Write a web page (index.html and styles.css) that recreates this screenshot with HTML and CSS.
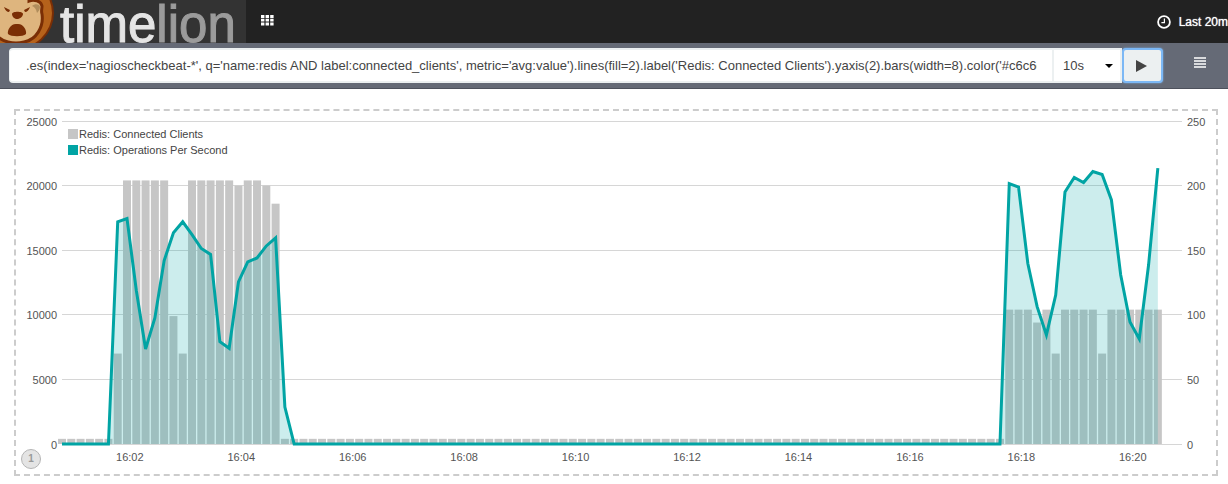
FILE: index.html
```html
<!DOCTYPE html>
<html lang="en">
  <head>
    <meta charset="UTF-8" />
    <meta name="viewport" content="width=device-width, initial-scale=1.0" />
    <title>Timelion</title>
    <link rel="stylesheet" href="styles.css">
  </head>
  <body>
    <header class="navbar">
      <a class="logo" href="#" aria-label="timelion">
        <svg class="lion" width="56" height="43" viewBox="0 0 56 43" aria-hidden="true">
          <ellipse cx="14" cy="13" rx="40" ry="38" fill="#7a2e05" />
          <ellipse cx="14" cy="13" rx="38" ry="36" fill="#b5621b" />
          <path d="M29 1 C34 -1 41 1 42 6 C42 9 41 11 42 14 C44 27 36 40 24 42 C20 43 12 43 8 42 C0 40 -4 36 -6 30 L-6 -4 L29 -4 Z" fill="#deb57e" stroke="#7a2e05" stroke-width="3" />
          <path d="M32 6 C35 3 40 4 40 7 C40 10 38 12 37 13 C36 9 35 7 32 6 Z" fill="#b08d5c" />
          <path d="M4 7 L10 10 L9 12 C7 12 5 10 4 7 Z M30 7 L24 10 L25 12 C27 12 29 10 30 7 Z" fill="#7a2e05" />
          <path d="M12 14 C12 11 23 11 23 14 C23 17 19 19 17 19 C15 19 12 17 12 14 Z" fill="#7a2e05" />
          <path d="M17 24 C23 23 27 30 26 34 C23 37 11 37 8 34 C7 30 11 23 17 24 Z" fill="#7a2e05" />
        </svg>
        <span class="wordmark">time<span class="wordmark-end">lion</span></span>
      </a>
      <button class="apps" type="button" aria-label="Apps">
        <svg width="13" height="11" viewBox="0 0 13 11" fill="#fff">
          <path d="M0 0h3.4v3H0z M4.6 0H8v3H4.6z M9.2 0h3.4v3H9.2z M0 3.8h3.4v2.8H0z M4.6 3.8H8v2.8H4.6z M9.2 3.8h3.4v2.8H9.2z M0 7.4h3.4v3H0z M4.6 7.4H8v3H4.6z M9.2 7.4h3.4v3H9.2z" />
        </svg>
      </button>
      <button class="timepicker" type="button">
        <svg width="14" height="14" viewBox="0 0 14 14" fill="none" stroke="#fff">
          <circle cx="7" cy="7" r="5.9" stroke-width="1.8" />
          <path d="M7.4 3.6V7.6H4.4" stroke-width="1.2" />
        </svg>
        <span>Last 20m</span>
      </button>
    </header>

    <form class="toolbar" onsubmit="return false">
      <div class="search">
        <input
          type="text"
          class="expression"
          aria-label="Timelion expression"
          spellcheck="false"
          value=".es(index='nagioscheckbeat-*', q='name:redis AND label:connected_clients', metric='avg:value').lines(fill=2).label('Redis: Connected Clients').yaxis(2).bars(width=8).color('#c6c6c6')"
        />
        <div class="interval">
          <select aria-label="Interval">
            <option>1s</option>
            <option selected>10s</option>
            <option>1m</option>
          </select>
        </div>
        <button class="run" type="submit" aria-label="Run">
          <svg width="11" height="12" viewBox="0 0 11 12"><path d="M0 0L11 6L0 12Z" fill="#444" /></svg>
        </button>
      </div>
      <button class="menu" type="button" aria-label="Menu">
        <svg width="12" height="11" viewBox="0 0 12 11"><path d="M0 1h12M0 4h12M0 7h12M0 10h12" stroke="#fff" stroke-width="1.4" /></svg>
      </button>
    </form>

    <main class="sheet">
      <section class="cell">
        <svg id="chart" class="chart" role="img" aria-label="Redis clients and operations"></svg>
        <ul class="legend">
          <li><i class="swatch clients"></i>Redis: Connected Clients</li>
          <li><i class="swatch operations"></i>Redis: Operations Per Second</li>
        </ul>
        <span class="cell-id">1</span>
      </section>
    </main>

    <script>
      const POINTS = 119;
      const SPAN = 120.6;
      const FIRST_TICK = 7.3;
      const HEIGHT = 363;
      const plot = { left: 46, right: 34, top: 10, bottom: 333 };

      const operations = new Array(POINTS).fill(0);
      const clients = new Array(POINTS).fill(4);

      function setValues(series, start, values) {
        values.forEach((value, i) => (series[start + i] = value));
      }

      setValues(operations, 6, [
        17200, 17450, 11900, 7350, 9750, 14200, 16350, 17200, 16200, 15130,
        14670, 7920, 7410, 12540, 14090, 14400, 15330, 15950, 2860,
      ]);
      setValues(operations, 102, [
        20150, 19890, 13970, 10630, 8440, 11530, 19500, 20630, 20240, 21090,
        20860, 18890, 13080, 9440, 8130, 13850, 21360,
      ]);
      setValues(clients, 6, [
        70, 204, 204, 204, 204, 204, 99, 70, 204, 204, 204, 204, 204, 200,
        204, 204, 200, 186,
      ]);
      setValues(clients, 102, [
        104, 104, 104, 94, 104, 70, 104, 104, 104, 104, 70, 104, 104, 104,
        104, 104, 104,
      ]);

      function drawChart() {
        const chart = document.getElementById("chart");
        const width = chart.parentElement.clientWidth;
        const step = (width - plot.left - plot.right) / SPAN;
        const end = width - plot.right;
        const x = (i) => plot.left + i * step;
        const y = (value, max) =>
          plot.bottom - (value / max) * (plot.bottom - plot.top);
        let out = "";

        for (let i = 0; i <= 5; i++) {
          const py = Math.floor(y(i, 5)) + 0.5;
          out += `<line class="grid" x1="${plot.left}" x2="${end}" y1="${py}" y2="${py}" />`;
          out += `<text class="tick" text-anchor="end" x="${plot.left - 5}" y="${py + 4}">${i * 5000}</text>`;
          out += `<text class="tick" x="${end + 5}" y="${py + 4}">${i * 50}</text>`;
        }

        clients.forEach((value, i) => {
          const top = y(value, 250);
          out += `<rect class="bar" x="${x(i) - step * 0.43}" y="${top}" width="${step * 0.86}" height="${plot.bottom - top}" />`;
        });

        const line = operations.map((value, i) => `${x(i)},${y(value, 25000)}`).join(" ");
        out += `<polygon class="area" points="${x(0)},${plot.bottom} ${line} ${x(POINTS - 1)},${plot.bottom}" />`;
        out += `<polyline class="line" points="${line}" />`;

        for (let i = 0; i < 10; i++) {
          const minute = String(2 + i * 2).padStart(2, "0");
          out += `<text class="tick" text-anchor="middle" x="${x(FIRST_TICK + i * 12)}" y="350">16:${minute}</text>`;
        }

        chart.setAttribute("width", width);
        chart.setAttribute("height", HEIGHT);
        chart.innerHTML = out;
      }

      drawChart();
      window.addEventListener("resize", drawChart);
    </script>
  </body>
</html>
```
FILE: styles.css
```css
* {
  box-sizing: border-box;
}
body {
  margin: 0;
  background-color: #fff;
  color: #444;
  font-family: "Liberation Sans", Arial, sans-serif;
  font-size: 13px;
}
button {
  display: flex;
  align-items: center;
  padding: 0;
  border: 0;
  background: none;
  font-family: inherit;
  cursor: pointer;
}
.navbar {
  display: flex;
  height: 43px;
  overflow: hidden;
  background-color: #222;
}
.logo {
  display: flex;
  width: 246px;
  background-color: #333;
  text-decoration: none;
}
.lion {
  flex: none;
}
.wordmark {
  margin-left: 4px;
  color: #e4e4e4;
  font-size: 51px;
  line-height: 49px;
  -webkit-text-stroke: 1px;
}
.wordmark-end {
  color: #9b9b9b;
}
.apps {
  margin-left: 15px;
  padding-bottom: 3px;
}
.timepicker {
  gap: 8px;
  margin-left: auto;
  color: #fff;
  font-size: 12px;
  text-shadow: 0 0 1px #fff;
  white-space: nowrap;
}
.toolbar {
  display: flex;
  align-items: flex-start;
  padding: 5px 22px 5px 9px;
  border-bottom: 1px solid #4d515c;
  background-color: #656a76;
}
.search {
  display: flex;
  flex: 1;
  min-width: 0;
  height: 35px;
}
.expression,
.interval select {
  height: 35px;
  border: 2px solid #ecf0f1;
  background-color: #fff;
  color: #444;
  font-family: inherit;
  font-size: 13px;
  outline: none;
}
.expression {
  flex: 1;
  min-width: 0;
  padding: 0 15px 0 16px;
  border-left-width: 1px;
  border-right-width: 1px;
  border-radius: 4px 0 0 4px;
}
.interval {
  position: relative;
}
.interval select {
  width: 69px;
  padding: 0 9px;
  border-left-width: 1px;
  border-radius: 0;
  appearance: none;
}
.interval::after {
  content: "";
  position: absolute;
  top: 16px;
  right: 9px;
  border: 4px solid transparent;
  border-top-color: #000;
  border-bottom: 0;
  pointer-events: none;
}
.run {
  justify-content: center;
  width: 41px;
  padding-right: 3px;
  border: 2px solid #7cb8f5;
  border-radius: 4px;
  background-color: #ecf0f1;
  box-shadow: 0 0 2px #7cb8f5;
}
.menu {
  margin: 9px 0 0 31px;
}
.sheet {
  padding: 20px 10px 8px 14px;
}
.cell {
  position: relative;
  border: 2px dashed #ccc;
}
.chart {
  display: block;
}
.grid {
  stroke: #d6d6d6;
}
.tick {
  fill: #545454;
  font-size: 11px;
}
.bar {
  fill: #c6c6c6;
}
.area {
  fill: #01a4a4;
  fill-opacity: 0.2;
}
.line {
  fill: none;
  stroke: #01a4a4;
  stroke-width: 3px;
}
.legend {
  position: absolute;
  top: 15px;
  left: 52px;
  margin: 0;
  padding: 0;
  list-style: none;
  font-size: 11px;
}
.legend li {
  display: flex;
  align-items: center;
  gap: 1px;
  height: 16px;
}
.swatch {
  width: 10px;
  height: 10px;
}
.swatch.clients {
  background-color: #c6c6c6;
}
.swatch.operations {
  background-color: #01a4a4;
}
.cell-id {
  position: absolute;
  bottom: 5px;
  left: 5px;
  width: 20px;
  border: 1px solid #b5b5b5;
  border-radius: 50%;
  background-color: #e4e4e4;
  color: #999;
  font-size: 10px;
  font-weight: bold;
  line-height: 18px;
  text-align: center;
}
```
